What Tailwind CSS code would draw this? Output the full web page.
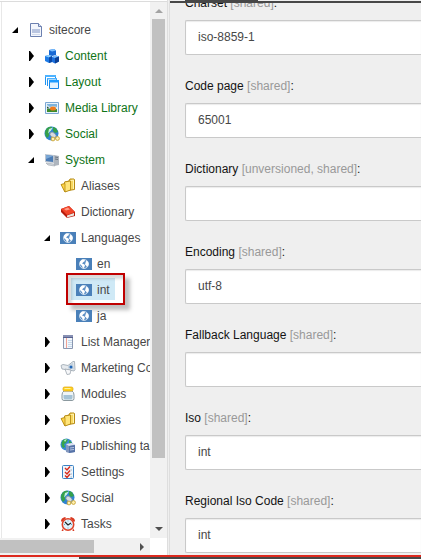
<!DOCTYPE html>
<html lang="en">
<head>
<meta charset="utf-8">
<meta name="viewport" content="width=device-width, initial-scale=1">
<title>Content Editor</title>
<script src="https://cdn.jsdelivr.net/npm/@tailwindcss/browser@4"></script>
</head>
<body class="h-screen overflow-hidden bg-[#efefef] font-['Liberation_Sans',Arial,sans-serif] text-xs text-[#474747]">
<svg class="hidden">
  <defs>
    <symbol id="closed" viewBox="0 0 5 10"><path d="M0 0H1L5 5L1 10H0Z" fill="#000"/></symbol>
    <symbol id="open" viewBox="0 0 6 6"><path d="M6 0V6H0Z" fill="#000"/></symbol>
    <symbol id="doc" viewBox="0 0 16 16"><path d="M2.500 1.500h8l3 3v10h-11z" fill="#f3f6fc" stroke="#6c80b0"/><path d="M10.500 1.500v3h3" fill="#dce4f4" stroke="#6c80b0"/><path d="M4 7h8v4H4z" fill="#b9c5e0"/><path d="M4 12.500h8" stroke="#d3dbec"/></symbol>
    <symbol id="cubes" viewBox="0 0 16 16"><path d="M5 2l5-1 2 1.500v4.500l-4 1-3-1z" fill="#1769d4"/><path d="M5 2l5-1 2 1.500-4 1z" fill="#7cc0ff"/><path d="M1 8l4-1 3 1v6l-3 1-4-2z" fill="#1e7be6"/><path d="M1 8l4-1 3 1-3 1.500z" fill="#8fd0ff"/><path d="M5 9.500l3-1.500v6l-3 1z" fill="#0a49a8"/><path d="M8 9l4-1.500 3 1v5l-4 2-3-1.500z" fill="#1a6edb"/><path d="M8 9l4-1.500 3 1-4 1.500z" fill="#7cc0ff"/><path d="M11 10l4-1.500v5l-4 2z" fill="#0b3f94"/></symbol>
    <symbol id="windows" viewBox="0 0 16 16"><path d="M1.500 11V1.500h10V4" fill="#fff" stroke="#2094f3"/><path d="M1 1h11v2H1z" fill="#4db2ff"/><path d="M3.500 12V4.500h9V7" fill="#fff" stroke="#2094f3"/><path d="M3 4h10v1.500H3z" fill="#4db2ff"/><path d="M5.500 6.500h9v8h-9z" fill="#e5f4ff" stroke="#1787e8"/><path d="M5 6h10v2.500H5z" fill="#1e9bff"/></symbol>
    <symbol id="media" viewBox="0 0 16 16"><path d="M1.500 2.500h13v11h-13z" fill="#e8f2fb" stroke="#7ca8d4"/><path d="M3 4h10v8H3z" fill="#7fb4dc"/><path d="M3 5l3 2 3-1 4 1v2H3z" fill="#d8e8ef"/><path d="M3 9l4 0 3 1 3-1v3H3z" fill="#3d8d2c"/><ellipse cx="9" cy="8.500" rx="3" ry="2" fill="#f07a1c"/><path d="M3 6.500l3 2H3z" fill="#234b2e"/></symbol>
    <symbol id="social" viewBox="0 0 16 16"><circle cx="7.500" cy="7.500" r="7" fill="#2f83d3"/><path d="M3 2Q6 0 8 1l-1 3-2 2v4l-2 2Q-1 7 3 2zM9 1l3 1 2 4-3 1-2-2z" fill="#35a04a"/><path d="M5 3l4-1.500-2 3-3 3z" fill="#c6f0e0"/><ellipse cx="9" cy="9" rx="3.500" ry="2.300" transform="rotate(40 9 9)" fill="#d5dbe2" stroke="#7f91a2" stroke-width=".8"/><circle cx="9" cy="13" r="1.900" fill="#fff0b0" stroke="#c9a436" stroke-width=".9"/><circle cx="13.500" cy="12.500" r="1.900" fill="#fff0b0" stroke="#c9a436" stroke-width=".9"/></symbol>
    <symbol id="system" viewBox="0 0 16 16"><path d="M1 2l9 1v8l-9-1z" fill="#bcc5d0"/><path d="M2 3l7 1v6L2 9z" fill="#4b7cb5"/><path d="M2 3l7 1-7 3z" fill="#7ba9d8"/><path d="M10 3l5 1v9l-5 1z" fill="#aeb5be"/><path d="M11 5l3 .5M11 7l3 .5" stroke="#6b747f"/><path d="M2 11l8 1 1 2-7-1z" fill="#cfd4da" stroke="#9da5ad" stroke-width=".6"/></symbol>
    <symbol id="folder" viewBox="0 0 16 16"><path d="M5 13V4l4-1 1-2h4l.5 1v9.500z" fill="#f8d860" stroke="#b58a14"/><path d="M10 3l3.500-1v9" fill="none" stroke="#fff3b0"/><path d="M1.500 6.500l3-.5v-2l6-1v9L5 14z" fill="#ffe57a" stroke="#b58a14" stroke-width=".9"/><path d="M1 6.500l4-1V14z" fill="#ffd447" stroke="#b58a14" stroke-width=".8"/></symbol>
    <symbol id="book" viewBox="0 0 16 16"><path d="M1 5l8-3 6 6v4l-8 2-6-6z" fill="#b81c0c"/><path d="M1 5l8-3 6 6-8 3z" fill="#f2452a"/><path d="M4 5l4-1.500 2 2-4 1z" fill="#ff9a84"/><path d="M7 11.500l7-2.500v2.500l-7 2z" fill="#e9e3dd"/></symbol>
    <symbol id="globe" viewBox="0 0 16 12"><path d="M0 0h16v12H0z" fill="#4a80b9"/><circle cx="8" cy="6" r="4.500" fill="#5c8fc4" stroke="#e6eff7" stroke-width=".8"/><path d="M4 3.500l2-2 2.500.2.500 1.300-1.500 1L6 5.500l1.500.5 1.500 1-.5 2-1.500 1.500-1-2.500-2-2zM10 3l1.500.3L12.500 5v2l-1.500 2-1-1.500-1-1z" fill="#fff"/></symbol>
    <symbol id="list" viewBox="0 0 16 16"><path d="M3.500 2.500h9v12h-9z" fill="#f2f6fb" stroke="#8996b0"/><path d="M3 1h10v3H3z" fill="#57618f"/><path d="M4 1v2m2-2v2m2-2v2m2-2v2m2-2v2" stroke="#d2d8ea" stroke-width=".8"/><path d="M6.500 4v10" stroke="#efa093"/><path d="M8 6.500h4m-4 2h4m-4 2h4m-4 2h4" stroke="#c5d8ea"/></symbol>
    <symbol id="marketing" viewBox="0 0 16 16"><path d="M1 5.500l2-1 5 1 5-4h1.500l.5 8-1 1.500-5-1-7-1z" fill="#e6eaee" stroke="#98a3ad" stroke-width=".8"/><path d="M8 6l5-3.500 1 7-6-1z" fill="#c4d2de"/><circle cx="11" cy="7" r="1.500" fill="#2166b8"/><path d="M5 9l6 1-1 4-3 .5z" fill="#f7f8fa" stroke="#9ea7b0" stroke-width=".8"/></symbol>
    <symbol id="jar" viewBox="0 0 16 16"><path d="M4 5Q2 6 2 9v3.500q0 2 2 2h8q2 0 2-2V9q0-3-2-4z" fill="#eef4f7" stroke="#8b999f"/><path d="M3.500 9h9v3l-1 1.500h-7l-1-1.500z" fill="#a5c3d6"/><rect x="3" y="1" width="10" height="4" rx="1.500" fill="#ffd21e" stroke="#dca10b" stroke-width=".7"/><path d="M4.500 2.500h6" stroke="#fff29a"/></symbol>
    <symbol id="publish" viewBox="0 0 16 16"><circle cx="6.500" cy="6.500" r="6" fill="#398bd4"/><path d="M3 2q3-2 5 0L6 5l-2 1 1 3-2 1Q0 6 3 2zM9 2l3 3-3 2z" fill="#38a64a"/><path d="M4 2l3-1-2 3z" fill="#c1f0d0"/><path d="M6 6l6-1 3 2v7l-6 1-3-1z" fill="#8397be"/><path d="M6 6l6-1 3 2-6 1z" fill="#dde4f3"/><path d="M9 8l6-1v7l-6 1z" fill="#5673a8"/><path d="M10 10l4-.5M10 12l4-.5" stroke="#b5c5e2"/></symbol>
    <symbol id="settings" viewBox="0 0 16 16"><rect x="2.500" y="1.500" width="11" height="13" rx="1" fill="#eef6fc" stroke="#3b82c4"/><path d="M5 4l2 2 3-3.500M5 8l2 2 3-3.500M5 11.500l2 2 3-3.500" fill="none" stroke="#d82b1c" stroke-width="1.400"/><path d="M10.500 6h1.500m-1.500 4h1.500m-1.500 3h1.500" stroke="#9db4c6"/></symbol>
    <symbol id="clock" viewBox="0 0 16 16"><path d="M1 5q0-3 4-4l1 1-4 4zM15 5q0-3-4-4l-1 1 4 4zM3 12l-1.500 3h2zM13 12l1.500 3h-2z" fill="#d83a22"/><circle cx="8" cy="8.500" r="5.700" fill="#e0f3fc" stroke="#df4329" stroke-width="1.600"/><path d="M5 6l3 3 3-2" fill="none" stroke="#222" stroke-width="1.200"/><path d="M8 4.500v1m0 6v1m-4-4h1m6 0h1" stroke="#67a8c8"/></symbol>
  </defs>
</svg>
<div class="flex h-full flex-col">
  <main class="flex min-h-0 flex-1">
    <section class="flex w-42 shrink-0 flex-col border-r border-[#dedede] bg-white" aria-label="Content tree">
      <div class="h-0.5 shrink-0 border-b border-[#dcdcdc]"></div>
      <div class="flex min-h-0 flex-1">
        <nav class="ml-px min-w-0 flex-1 overflow-hidden border-l border-[#e8e8e8] pt-[15px] whitespace-nowrap">
          <ul id="tree"></ul>
        </nav>
        <div class="flex w-[17px] shrink-0 flex-col items-center bg-[#f1f1f1]">
          <svg class="mt-[7px] mb-[5px] h-[5px] w-2 shrink-0" viewBox="0 0 8 5"><path d="M0 4L4 0L8 4Z" fill="#a3a3a3"/></svg>
          <div class="h-[439px] w-[13px] shrink-0 bg-[#c1c1c1]"></div>
          <svg class="mt-auto mb-1.5 h-[5px] w-2 shrink-0" viewBox="0 0 8 5"><path d="M0 0L4 4L8 0Z" fill="#505050"/></svg>
        </div>
      </div>
      <div class="flex h-[17px] shrink-0 items-center">
        <div class="flex h-full flex-1 items-center justify-between bg-[#f1f1f1] pr-1.5">
          <div class="h-[13px] w-[94px] bg-[#c1c1c1]"></div>
          <svg class="h-2 w-1" viewBox="0 0 4 8"><path d="M0 0L4 4L0 8Z" fill="#505050"/></svg>
        </div>
        <div class="w-[17px]"></div>
      </div>
    </section>
    <div class="w-0.5 shrink-0 border-r border-[#dedede] bg-[#efefef]"></div>
    <section class="flex min-w-0 flex-1 flex-col overflow-hidden" aria-label="Fields">
      <div class="h-[3px] shrink-0 border-b-2 border-[#474747]"><div class="ml-[15px] h-px w-[73px] bg-[#474747]"></div></div>
      <form id="fields" class="-mt-2 min-h-0 flex-1 overflow-hidden pl-[15px] [clip-path:inset(8px_0_0_0)]"></form>
    </section>
  </main>
  <footer class="h-1 shrink-0 border-t-2 border-[#dc291e]"><div class="ml-[79px] h-0.5 bg-[#474747]"></div></footer>
</div>
<script>
const rows = [
  [0, 'open', 'doc', 'sitecore'],
  [1, 'closed', 'cubes', 'Content'],
  [1, 'closed', 'windows', 'Layout'],
  [1, 'closed', 'media', 'Media Library'],
  [1, 'closed', 'social', 'Social'],
  [1, 'open', 'system', 'System'],
  [2, '', 'folder', 'Aliases'],
  [2, '', 'book', 'Dictionary'],
  [2, 'open', 'globe', 'Languages'],
  [3, '', 'globe', 'en'],
  [3, '', 'globe', 'int'],
  [3, '', 'globe', 'ja'],
  [2, 'closed', 'list', 'List Manager'],
  [2, 'closed', 'marketing', 'Marketing Control Panel'],
  [2, 'closed', 'jar', 'Modules'],
  [2, 'closed', 'folder', 'Proxies'],
  [2, 'closed', 'publish', 'Publishing targets'],
  [2, 'closed', 'settings', 'Settings'],
  [2, 'closed', 'social', 'Social'],
  [2, 'closed', 'clock', 'Tasks']
];
const indent = ['pl-2.5', 'pl-[26px]', 'pl-[42px]', 'pl-[58px]'];
document.getElementById('tree').innerHTML = rows.map(([level, arrow, icon, name]) => {
  const mark = arrow === 'open' ? '<svg class="h-1.5 w-1.5"><use href="#open"/></svg>'
    : arrow === 'closed' ? '<svg class="ml-px h-2.5 w-[5px]"><use href="#closed"/></svg>' : '';
  const size = icon === 'globe' ? 'h-3 w-4' : 'h-4 w-4';
  const selected = name === 'int';
  return `<li class="flex h-[26px] items-center ${indent[level]}">
    <span class="flex w-2.5 shrink-0 items-center">${mark}</span>
    <a href="#" class="relative mb-0.5 ml-px flex h-[22px] shrink-0 items-center gap-[5px] px-[5px] pt-0.5 ${selected ? 'bg-[#cfe9f6]' : ''} ${level === 1 ? 'text-[#0f7417]' : ''}">
      <svg class="${size}"><use href="#${icon}"/></svg><span>${name}</span>
      ${selected ? '<span class="absolute -top-[5px] -left-[5px] h-8 w-[59px] border-2 border-[#c00000] shadow-[5px_5px_4px_rgba(0,0,0,0.25),inset_4px_4px_3px_rgba(0,0,0,0.15)]"></span>' : ''}
    </a></li>`;
}).join('');
const fields = [
  ['Charset', 'shared', 'iso-8859-1'],
  ['Code page', 'shared', '65001'],
  ['Dictionary', 'unversioned, shared', ''],
  ['Encoding', 'shared', 'utf-8'],
  ['Fallback Language', 'shared', ''],
  ['Iso', 'shared', 'int'],
  ['Regional Iso Code', 'shared', 'int']
];
document.getElementById('fields').innerHTML = fields.map(([name, scope, value], i) => `
  <div class="h-[83px]">
    <label for="field${i}" class="block h-[25px] leading-4 text-[#131313]">${name} <span class="text-[#999]">[${scope}]</span>:</label>
    <input id="field${i}" value="${value}" class="block h-[35px] w-full rounded-l-[2px] border border-r-0 border-[#c9c9c9] bg-white px-3 pb-0.5 text-[#474747] shadow-[inset_0_1px_1px_rgba(0,0,0,0.08)]">
  </div>`).join('');
</script>
</body>
</html>
